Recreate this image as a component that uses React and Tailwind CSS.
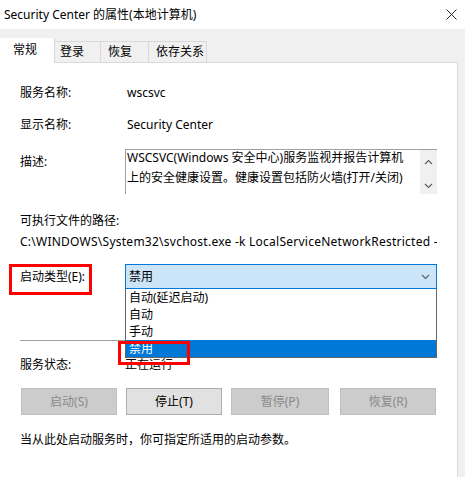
import React from 'react'

const font = { fontFamily: '"Segoe UI", "Noto Sans", "Noto Sans CJK SC", sans-serif' }

function Chevron({ up, className }) {
  return (
    <svg width="9" height="6" viewBox="0 0 9 6" className={className}>
      <path d={up ? 'M1 5 L4.5 1.5 L8 5' : 'M1 1 L4.5 4.5 L8 1'} fill="none" stroke="currentColor" strokeWidth="1.2" />
    </svg>
  )
}

function Btn({ children, disabled, className }) {
  return (
    <div
      className={
        'h-[27px] flex items-center justify-center border ' +
        (disabled ? 'bg-[#cccccc] border-[#bfbfbf] text-[#8a8a8a] ' : 'bg-[#e1e1e1] border-[#adadad] text-black ') +
        className
      }
    >
      {children}
    </div>
  )
}

export default function App() {
  return (
    <div style={font} className="w-[465px] h-[477px] overflow-hidden bg-[#f0f0f0] text-[12px] text-black relative">
      {/* title bar */}
      <div className="h-[29px] bg-white flex items-center justify-between pl-[4px] pr-[8px]">
        <span className="leading-[17px]">Security Center 的属性(本地计算机)</span>
        <svg width="11" height="11" viewBox="0 0 11 11">
          <path d="M0.5 0.5 L10.5 10.5 M10.5 0.5 L0.5 10.5" stroke="#222" strokeWidth="1" />
        </svg>
      </div>

      {/* tabs */}
      <div className="h-[33px] flex items-end">
        <div className="w-[55px] h-[25px] -mb-[1px] bg-white border-r border-[#d9d9d9] relative z-10 pl-[13px] pt-[3px] leading-[17px]">
          常规
        </div>
        <div className="w-[46px] h-[21px] border-t border-r border-[#d9d9d9] pl-[5px] pt-[1px] leading-[17px]">登录</div>
        <div className="w-[48px] h-[21px] border-t border-r border-[#d9d9d9] pl-[7px] pt-[1px] leading-[17px]">恢复</div>
        <div className="w-[58px] h-[21px] border-t border-r border-[#d9d9d9] pl-[7px] pt-[1px] leading-[17px]">依存关系</div>
      </div>

      {/* panel */}
      <div className="w-[458px] h-[420px] bg-white border-t border-r border-[#d9d9d9] relative px-[20px]">
        <div className="mt-[21px] flex leading-[17px]">
          <div className="w-[107px]">服务名称:</div>
          <div>wscsvc</div>
        </div>
        <div className="mt-[15px] flex leading-[17px]">
          <div className="w-[107px]">显示名称:</div>
          <div>Security Center</div>
        </div>
        <div className="mt-[16px] flex">
          <div className="w-[105px] pt-[4px] leading-[17px]">描述:</div>
          <div className="w-[312px] h-[45px] border-t border-l border-[#a0a0a0] flex overflow-hidden">
            <div className="flex-1 pl-[1px] leading-[20px] -mt-[2px] whitespace-nowrap">
              WSCSVC(Windows 安全中心)服务监视并报告计算机
              <br />
              上的安全健康设置。健康设置包括防火墙(打开/关闭)
            </div>
            <div className="w-[17px] bg-[#f0f0f0] flex flex-col items-center justify-between pt-[9px] pb-[5px] text-[#606060]">
              <Chevron up />
              <Chevron />
            </div>
          </div>
        </div>
        <div className="mt-[18px] leading-[17px]">可执行文件的路径:</div>
        <div className="mt-[4px] leading-[17px] w-[417px] overflow-hidden whitespace-nowrap tracking-[0.25px]">
          C:\WINDOWS\System32\svchost.exe -k LocalServiceNetworkRestricted -p
        </div>
        <div className="mt-[14px] flex relative">
          <div className="w-[105px] pt-[4px] leading-[17px]">启动类型(E):</div>
          <div className="w-[312px] h-[25px] bg-[#cce4f7] border border-[#0078d7] flex items-center justify-between pl-[3px] pr-[6px]">
            <span className="leading-[17px]">禁用</span>
            <Chevron className="text-[#606060]" />
          </div>
          {/* dropdown list */}
          <div className="absolute left-[105px] top-[25px] w-[312px] bg-white border-x border-b border-[#646464] z-20 leading-[17px]">
            <div className="pl-[3px] h-[17px]">自动(延迟启动)</div>
            <div className="pl-[3px] h-[17px]">自动</div>
            <div className="pl-[3px] h-[17px]">手动</div>
            <div className="pl-[3px] h-[17px] bg-[#0078d7] text-white">禁用</div>
          </div>
          <div className="absolute -left-[11px] top-0 w-[83px] h-[31px] border-[3px] border-[#ff0000] z-30" />
          <div className="absolute left-[98px] top-[77px] w-[72px] h-[24px] border-[3px] border-[#ff0000] z-30" />
        </div>
        <div className="mt-[51px] h-[1px] bg-[#a0a0a0] w-[417px]" />
        <div className="mt-[15px] flex leading-[17px]">
          <div className="w-[105px]">服务状态:</div>
          <div>正在运行</div>
        </div>
        <div className="mt-[15px] flex">
          <Btn disabled className="w-[96px] ml-[1px]">启动(S)</Btn>
          <Btn className="w-[96px] ml-[9px]">停止(T)</Btn>
          <Btn disabled className="w-[98px] ml-[9px]">暂停(P)</Btn>
          <Btn disabled className="w-[96px] ml-[11px]">恢复(R)</Btn>
        </div>
        <div className="mt-[16px] leading-[17px]">当从此处启动服务时，你可指定所适用的启动参数。</div>
      </div>
    </div>
  )
}
